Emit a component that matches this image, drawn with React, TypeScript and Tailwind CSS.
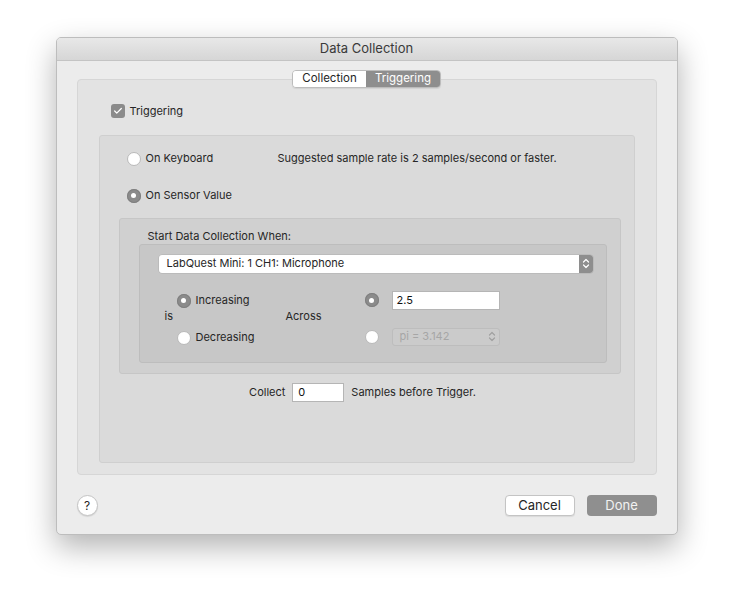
import { Check } from "lucide-react";

const Radio = ({ on }: { on?: boolean }) =>
  on ? (
    <span className="flex h-[14px] w-[14px] shrink-0 items-center justify-center rounded-full bg-[#8b8b8b] shadow-[inset_0_0_0_1px_#7f7f7f]">
      <span className="h-[5px] w-[5px] rounded-full bg-white" />
    </span>
  ) : (
    <span className="h-[14px] w-[14px] shrink-0 rounded-full border border-[#b9b9b9] bg-white" />
  );

const Stepper = ({ dim }: { dim?: boolean }) => (
  <svg width="8" height="11" viewBox="0 0 8 11" fill="none" className={dim ? "text-[#a0a0a0]" : "text-white"}>
    <path d="M1.5 4 L4 1.5 L6.5 4 M1.5 7 L4 9.5 L6.5 7" stroke="currentColor" strokeWidth="1.2" strokeLinecap="round" strokeLinejoin="round" />
  </svg>
);

const App = () => {
  return (
    <div className="flex h-[609px] w-[733px] justify-center bg-white pt-[37px] font-['Inter','Liberation_Sans',sans-serif] text-[11px] text-[#262626]">
      <div className="flex h-[498px] w-[622px] flex-col overflow-hidden rounded-[5px] border border-[#bdbdbd] bg-[#ececec] shadow-[0_12px_30px_rgba(0,0,0,0.3)]">
        <div className="flex h-[23px] shrink-0 items-center justify-center border-b border-[#c4c4c4] bg-gradient-to-b from-[#e8e8e8] to-[#d6d6d6] text-[13px] text-[#3a3a3a]">
          Data Collection
        </div>

        <div className="flex flex-1 flex-col px-[20px]">
          <div className="relative z-10 mt-[9px] flex h-[18px] justify-center">
            <div className="flex overflow-hidden rounded-[4px] border border-[#bcbcbc] text-[11.5px] shadow-[0_1px_1px_rgba(0,0,0,0.08)]">
              <span className="flex w-[73px] items-center justify-center bg-white text-[#262626]">Collection</span>
              <span className="flex w-[74px] items-center justify-center bg-[#8e8e8e] text-white">Triggering</span>
            </div>
          </div>

          <div className="-mt-[9px] flex h-[396px] flex-col rounded-[4px] border border-[#d6d6d6] bg-[#e3e3e3] px-[21px] pb-[11px]">
            <div className="mt-[23px] flex items-center gap-[5px] pl-[12px]">
              <span className="flex h-[14px] w-[14px] items-center justify-center rounded-[3px] bg-[#8b8b8b]">
                <Check className="h-[10px] w-[10px] text-white" strokeWidth={3} />
              </span>
              <span>Triggering</span>
            </div>

            <div className="mt-[15px] flex flex-1 flex-col rounded-[3px] border border-[#cfcfcf] bg-[#dadada] pl-[19px] pr-[13px]">
              <div className="mt-[16px] flex h-[14px] items-center pl-[8px]">
                <Radio />
                <span className="ml-[5px] w-[132px]">On Keyboard</span>
                <span>Suggested sample rate is 2 samples/second or faster.</span>
              </div>
              <div className="mt-[23px] flex h-[14px] items-center pl-[8px]">
                <Radio on />
                <span className="ml-[5px]">On Sensor Value</span>
              </div>

              <div className="mt-[15px] flex h-[156px] flex-col rounded-[3px] border border-[#c6c6c6] bg-[#d0d0d0] pl-[19px] pr-[13px] pb-[10px]">
                <div className="mt-[10px] pl-[9px] leading-[15px]">Start Data Collection When:</div>
                <div className="flex flex-1 flex-col rounded-[3px] border border-[#bdbdbd] bg-[#c7c7c7] pl-[19px] pr-[13px]">
                  <div className="mt-[10px] flex h-[18px] items-center rounded-[3px] bg-white pl-[8px] shadow-[0_0_0_0.5px_#b0b0b0]">
                    <span className="flex-1">LabQuest Mini: 1 CH1: Microphone</span>
                    <span className="flex h-[18px] w-[14px] items-center justify-center rounded-r-[3px] bg-[#8e8e8e]">
                      <Stepper />
                    </span>
                  </div>

                  <div className="mt-[20px] flex items-center">
                    <span className="mb-[5px] w-[18px] pl-[6px]">is</span>
                    <div className="flex w-[109px] flex-col gap-[23px]">
                      <div className="flex h-[14px] items-center gap-[5px]">
                        <Radio on />
                        <span>Increasing</span>
                      </div>
                      <div className="flex h-[14px] items-center gap-[5px]">
                        <Radio />
                        <span>Decreasing</span>
                      </div>
                    </div>
                    <span className="mb-[5px] w-[79px]">Across</span>
                    <div className="-mt-[2px] flex flex-col gap-[18px]">
                      <div className="flex h-[19px] items-center">
                        <Radio on />
                        <span className="ml-[13px] flex h-[19px] w-[108px] items-center border border-[#b5b5b5] bg-white pl-[4px] text-[#111]">2.5</span>
                      </div>
                      <div className="flex h-[18px] items-center">
                        <Radio />
                        <span className="ml-[13px] flex h-[18px] w-[108px] items-center justify-between rounded-[3px] border border-[#bdbdbd] bg-[#cbcbcb] pl-[7px] pr-[3px] text-[#a6a6a6]">
                          pi = 3.142
                          <Stepper dim />
                        </span>
                      </div>
                    </div>
                  </div>
                </div>
              </div>

              <div className="mt-[9px] flex items-center justify-center gap-[7px] pr-[14px]">
                <span>Collect</span>
                <span className="flex h-[19px] w-[52px] items-center border border-[#b5b5b5] bg-white pl-[5px] text-[#111]">0</span>
                <span>Samples before Trigger.</span>
              </div>
            </div>
          </div>

          <div className="mt-[20px] flex items-center">
            <span className="flex h-[21px] w-[21px] items-center justify-center rounded-full border border-[#c4c4c4] bg-white text-[12px] shadow-[0_1px_1px_rgba(0,0,0,0.1)]">
              ?
            </span>
            <span className="ml-auto flex h-[21px] w-[70px] items-center justify-center rounded-[4px] border border-[#c4c4c4] bg-white text-[13px] shadow-[0_1px_1px_rgba(0,0,0,0.08)]">
              Cancel
            </span>
            <span className="ml-[12px] flex h-[21px] w-[70px] items-center justify-center rounded-[4px] bg-[#8f8f8f] text-[13px] text-[#f2f2f2]">
              Done
            </span>
          </div>
        </div>
      </div>
    </div>
  );
};

export default App;
